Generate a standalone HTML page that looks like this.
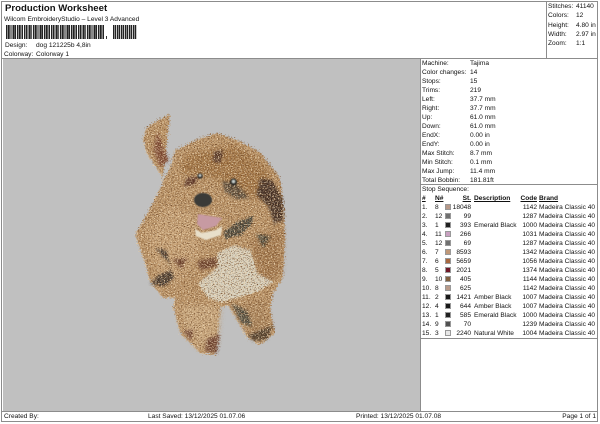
<!DOCTYPE html>
<html><head><meta charset="utf-8"><style>
html,body{margin:0;padding:0;background:#fff}
#p{position:relative;width:600px;height:424px;overflow:hidden;background:#fff;font:6.6px/9px "Liberation Sans",sans-serif;color:#111;filter:blur(.3px)}
#p div,#p span.a{position:absolute;white-space:nowrap}
.ln{background:#8c8c8c}
.r{height:9px}
.r span{position:absolute;top:0;white-space:nowrap}
.sw{width:4px;height:4px;border:1px solid #999;top:1px!important}
.st{right:auto;text-align:right;width:30px;left:441px}
.cd{text-align:right;width:30px;left:507px}
.h{font-weight:bold;text-decoration:underline}
</style></head><body><div id="p">
<div class="ln" style="left:1px;top:1px;width:597px;height:1px"></div>
<div class="ln" style="left:1px;top:1px;width:1px;height:421px"></div>
<div class="ln" style="left:597px;top:1px;width:1px;height:421px"></div>
<div class="ln" style="left:1px;top:421px;width:597px;height:1px"></div>
<div class="ln" style="left:1px;top:411px;width:597px;height:1px"></div>
<div class="ln" style="left:1px;top:58px;width:597px;height:1px"></div>
<div class="ln" style="left:546px;top:1px;width:1px;height:58px"></div>
<div class="ln" style="left:420px;top:58px;width:1px;height:354px"></div>
<div class="ln" style="left:421px;top:184px;width:177px;height:1px"></div>
<div class="ln" style="left:421px;top:338px;width:177px;height:1px"></div>

<div style="left:5px;top:2px;font:bold 9.6px/13px 'Liberation Sans',sans-serif;color:#111">Production Worksheet</div>
<div style="left:4px;top:15px">Wilcom EmbroideryStudio – Level 3 Advanced</div>
<div style="left:6px;top:25px;width:98px;height:14px;background:repeating-linear-gradient(90deg,#222 0 1px,#fff 1px 1.6px,#222 1.6px 3px,#999 3px 3.7px,#222 3.7px 4.6px,#eee 4.6px 5.4px)"></div>
<div style="left:106px;top:36px;width:1px;height:3px;background:#333"></div>
<div style="left:113px;top:25px;width:24px;height:14px;background:repeating-linear-gradient(90deg,#222 0 1px,#fff 1px 1.6px,#222 1.6px 3px,#ccc 3px 4px)"></div>
<div style="left:5px;top:41px">Design:</div><div style="left:36px;top:41px">dog 121225b 4,8in</div>
<div style="left:4px;top:50px">Colorway:</div><div style="left:36px;top:50px">Colorway 1</div>

<div style="left:548px;top:2px">Stitches:</div><div style="left:576px;top:2px">41140</div>
<div style="left:548px;top:11px">Colors:</div><div style="left:576px;top:11px">12</div>
<div style="left:548px;top:21px">Height:</div><div style="left:576px;top:21px">4.80 in</div>
<div style="left:548px;top:30px">Width:</div><div style="left:576px;top:30px">2.97 in</div>
<div style="left:548px;top:39px">Zoom:</div><div style="left:576px;top:39px">1:1</div>

<div style="left:3px;top:59px;width:417px;height:352px;background:#c0c0c0"></div>
<svg style="position:absolute;left:0;top:0" width="600" height="424" viewBox="0 0 600 424">
<defs>
<filter id="t" x="-10%" y="-10%" width="120%" height="120%" color-interpolation-filters="sRGB">
<feTurbulence type="fractalNoise" baseFrequency=".7 .9" numOctaves="2" seed="4" result="n"/>
<feDisplacementMap in="SourceGraphic" in2="n" scale="8" xChannelSelector="R" yChannelSelector="G" result="d"/>
<feColorMatrix in="n" type="matrix" values="0 0 0 0 .93  0 0 0 0 .84  0 0 0 0 .7  3.4 0 0 0 -1.55" result="l"/>
<feComposite in="l" in2="d" operator="in" result="li"/>
<feColorMatrix in="n" type="matrix" values="0 0 0 0 .42  0 0 0 0 .27  0 0 0 0 .15  0 3.4 0 0 -1.75" result="k"/>
<feComposite in="k" in2="d" operator="in" result="ki"/>
<feMerge><feMergeNode in="d"/><feMergeNode in="li"/><feMergeNode in="ki"/></feMerge>
</filter>
<filter id="b" x="-30%" y="-30%" width="160%" height="160%"><feGaussianBlur stdDeviation="3"/></filter>
<filter id="s" x="-30%" y="-30%" width="160%" height="160%"><feGaussianBlur stdDeviation="1"/></filter>
<filter id="f" x="-30%" y="-30%" width="160%" height="160%"><feGaussianBlur stdDeviation=".6"/></filter>
</defs>
<g filter="url(#t)">
<path fill="#b78f62" d="M170 114 158 120 146 128 143 140 147 153 156 168 164 178 170 168 175 150 180 148 200 138 217 133 237 140 260 152 280 178 284 212 285 237 283 277 273 293 270 310 275 333 260 345 247 337 228 305 220 307 215 355 200 353 180 333 173 307 175 298 163 298 150 282 145 263 135 235 150 208 162 185Z"/>
<g filter="url(#b)">
<path fill="#9f7140" d="M185 155 235 145 265 165 278 200 250 198 215 178 180 172Z"/>
<path fill="#c49e72" d="M145 232 170 205 195 215 200 250 175 285 158 275Z"/>
<path fill="#a07448" d="M250 240 282 228 280 272 264 288 256 268Z"/>
<path fill="#c8a67c" d="M180 305 220 305 216 345 200 348 184 330Z"/>
<path fill="#a98258" d="M234 306 264 300 270 330 255 338Z"/>
</g>
<g filter="url(#s)">
<path fill="#3e2c24" d="M260 178 272 180 282 198 283 220 274 224 268 206 256 195Z"/>
<path fill="#3f382f" d="M222 180 238 185 249 198 236 199 224 191Z" opacity=".8"/>
<path fill="#5c3628" d="M186 178 198 176 195 184 183 187Z"/>
<path fill="#4f3226" d="M214 151 223 150 220 163 212 161Z"/>
<path fill="#3c3229" d="M155 248 166 250 171 270 158 275 150 284 164 286 174 278 168 262Z"/>
<path fill="#693d2a" d="M172 259 187 258 181 269ZM197 261 215 257 218 266 200 270Z"/>
<path fill="#4c483e" d="M231 303 247 311 252 327 240 322Z"/>
<path fill="#4c3a2c" d="M247 335 273 325 267 339 254 341Z"/>
<path fill="#6e4232" d="M183 331 193 329 191 341ZM206 339 219 334 217 353 205 351Z"/>
<path fill="#7d4630" d="M157 131 164 150 169 160 160 167 153 150Z"/>
<path fill="#3e3c32" d="M256 234 270 236 263 248Z"/>
</g>
<path fill="#d8d3c2" d="M217 253 233 245 250 250 257 273 273 282 260 290 240 297 220 302 207 297 198 283 217 267Z"/>
<path fill="#454339" d="M223 232 238 221 253 216 251 225 240 235 225 239Z"/>
</g>
<g filter="url(#f)">
<ellipse cx="203" cy="200" rx="9" ry="7" fill="#3a3b38"/>
<path fill="#e8dfca" d="M195 229 202 233 216 230 222 226 221 235 206 240 196 236Z"/>
<path fill="#c79aa2" d="M198 214 222 218 216 226 203 230 197 224Z"/>
<circle cx="200" cy="176" r="2.800" fill="#2d2c28"/><circle cx="200" cy="175.500" r="1.200" fill="#cfd6d2"/>
<circle cx="233.500" cy="182" r="3.600" fill="#2d2c28"/><circle cx="233.500" cy="181.500" r="1.600" fill="#c4cbc8"/>
</g>
</svg>

<div style="left:422px;top:59px">Machine:</div><div style="left:470px;top:59px">Tajima</div>
<div style="left:422px;top:68px">Color changes:</div><div style="left:470px;top:68px">14</div>
<div style="left:422px;top:77px">Stops:</div><div style="left:470px;top:77px">15</div>
<div style="left:422px;top:86px">Trims:</div><div style="left:470px;top:86px">219</div>
<div style="left:422px;top:95px">Left:</div><div style="left:470px;top:95px">37.7 mm</div>
<div style="left:422px;top:104px">Right:</div><div style="left:470px;top:104px">37.7 mm</div>
<div style="left:422px;top:113px">Up:</div><div style="left:470px;top:113px">61.0 mm</div>
<div style="left:422px;top:122px">Down:</div><div style="left:470px;top:122px">61.0 mm</div>
<div style="left:422px;top:131px">EndX:</div><div style="left:470px;top:131px">0.00 in</div>
<div style="left:422px;top:140px">EndY:</div><div style="left:470px;top:140px">0.00 in</div>
<div style="left:422px;top:149px">Max Stitch:</div><div style="left:470px;top:149px">8.7 mm</div>
<div style="left:422px;top:158px">Min Stitch:</div><div style="left:470px;top:158px">0.1 mm</div>
<div style="left:422px;top:167px">Max Jump:</div><div style="left:470px;top:167px">11.4 mm</div>
<div style="left:422px;top:176px">Total Bobbin:</div><div style="left:470px;top:176px">181.81ft</div>
<div style="left:422px;top:185px">Stop Sequence:</div>

<div class="r" style="left:0;top:194px;width:600px"><span class="h" style="left:422px">#</span><span class="h" style="left:435px">N#</span><span class="h st">St.</span><span class="h" style="left:474px">Description</span><span class="h cd">Code</span><span class="h" style="left:539px">Brand</span></div>
<div class="r" style="left:0;top:203px;width:600px"><span style="left:422px">1.</span><span style="left:435px">8</span><span class="sw" style="left:445px;background:#b89a8a"></span><span class="st">18048</span><span class="cd">1142</span><span style="left:539px">Madeira Classic 40</span></div>
<div class="r" style="left:0;top:212px;width:600px"><span style="left:422px">2.</span><span style="left:435px">12</span><span class="sw" style="left:445px;background:#707070"></span><span class="st">99</span><span class="cd">1287</span><span style="left:539px">Madeira Classic 40</span></div>
<div class="r" style="left:0;top:221px;width:600px"><span style="left:422px">3.</span><span style="left:435px">1</span><span class="sw" style="left:445px;background:#202020"></span><span class="st">393</span><span style="left:474px">Emerald Black</span><span class="cd">1000</span><span style="left:539px">Madeira Classic 40</span></div>
<div class="r" style="left:0;top:230px;width:600px"><span style="left:422px">4.</span><span style="left:435px">11</span><span class="sw" style="left:445px;background:#c8a0c0"></span><span class="st">266</span><span class="cd">1031</span><span style="left:539px">Madeira Classic 40</span></div>
<div class="r" style="left:0;top:239px;width:600px"><span style="left:422px">5.</span><span style="left:435px">12</span><span class="sw" style="left:445px;background:#707070"></span><span class="st">69</span><span class="cd">1287</span><span style="left:539px">Madeira Classic 40</span></div>
<div class="r" style="left:0;top:248px;width:600px"><span style="left:422px">6.</span><span style="left:435px">7</span><span class="sw" style="left:445px;background:#c09878"></span><span class="st">8593</span><span class="cd">1342</span><span style="left:539px">Madeira Classic 40</span></div>
<div class="r" style="left:0;top:257px;width:600px"><span style="left:422px">7.</span><span style="left:435px">6</span><span class="sw" style="left:445px;background:#a86840"></span><span class="st">5659</span><span class="cd">1056</span><span style="left:539px">Madeira Classic 40</span></div>
<div class="r" style="left:0;top:266px;width:600px"><span style="left:422px">8.</span><span style="left:435px">5</span><span class="sw" style="left:445px;background:#701828"></span><span class="st">2021</span><span class="cd">1374</span><span style="left:539px">Madeira Classic 40</span></div>
<div class="r" style="left:0;top:275px;width:600px"><span style="left:422px">9.</span><span style="left:435px">10</span><span class="sw" style="left:445px;background:#806040"></span><span class="st">405</span><span class="cd">1144</span><span style="left:539px">Madeira Classic 40</span></div>
<div class="r" style="left:0;top:284px;width:600px"><span style="left:422px">10.</span><span style="left:435px">8</span><span class="sw" style="left:445px;background:#b89a8a"></span><span class="st">625</span><span class="cd">1142</span><span style="left:539px">Madeira Classic 40</span></div>
<div class="r" style="left:0;top:293px;width:600px"><span style="left:422px">11.</span><span style="left:435px">2</span><span class="sw" style="left:445px;background:#181818"></span><span class="st">1421</span><span style="left:474px">Amber Black</span><span class="cd">1007</span><span style="left:539px">Madeira Classic 40</span></div>
<div class="r" style="left:0;top:302px;width:600px"><span style="left:422px">12.</span><span style="left:435px">4</span><span class="sw" style="left:445px;background:#181818"></span><span class="st">644</span><span style="left:474px">Amber Black</span><span class="cd">1007</span><span style="left:539px">Madeira Classic 40</span></div>
<div class="r" style="left:0;top:311px;width:600px"><span style="left:422px">13.</span><span style="left:435px">1</span><span class="sw" style="left:445px;background:#202020"></span><span class="st">585</span><span style="left:474px">Emerald Black</span><span class="cd">1000</span><span style="left:539px">Madeira Classic 40</span></div>
<div class="r" style="left:0;top:320px;width:600px"><span style="left:422px">14.</span><span style="left:435px">9</span><span class="sw" style="left:445px;background:#505050"></span><span class="st">70</span><span class="cd">1239</span><span style="left:539px">Madeira Classic 40</span></div>
<div class="r" style="left:0;top:329px;width:600px"><span style="left:422px">15.</span><span style="left:435px">3</span><span class="sw" style="left:445px;background:#e8e8e8"></span><span class="st">2240</span><span style="left:474px">Natural White</span><span class="cd">1004</span><span style="left:539px">Madeira Classic 40</span></div>

<div style="left:4px;top:412px">Created By:</div>
<div style="left:148px;top:412px">Last Saved: 13/12/2025 01.07.06</div>
<div style="left:356px;top:412px">Printed: 13/12/2025 01.07.08</div>
<div style="right:4px;top:412px">Page 1 of 1</div>
</div></body></html>
